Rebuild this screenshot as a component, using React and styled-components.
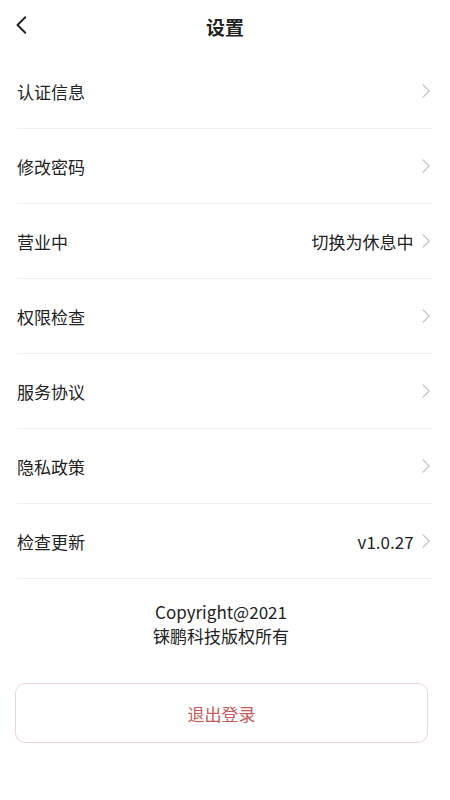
import React from "react"
import styled, { createGlobalStyle } from "styled-components"

const items = [
  { label: "认证信息" },
  { label: "修改密码" },
  { label: "营业中", value: "切换为休息中" },
  { label: "权限检查" },
  { label: "服务协议" },
  { label: "隐私政策" },
  { label: "检查更新", value: "v1.0.27" },
]

const Chevron = ({ size = 14, color = "#c9c9c9", dir = "right", width = 1.4 }) => (
  <svg width={size * 0.6} height={size} viewBox="0 0 8 14" fill="none">
    <path
      d={dir === "right" ? "M1 1 L7 7 L1 13" : "M7 1 L1 7 L7 13"}
      stroke={color}
      strokeWidth={width}
      strokeLinecap="round"
      strokeLinejoin="round"
    />
  </svg>
)

const App = () => (
  <Page>
    <GlobalStyle />
    <Header>
      <Back>
        <Chevron size={18} color="#222" dir="left" width={1.5} />
      </Back>
      <Title>设置</Title>
    </Header>
    <List>
      {items.map(item => (
        <Row key={item.label}>
          <Label>{item.label}</Label>
          <Right>
            {item.value && <Value>{item.value}</Value>}
            <Chevron />
          </Right>
        </Row>
      ))}
    </List>
    <Copyright>
      <Line>Copyright@2021</Line>
      <Line>铼鹏科技版权所有</Line>
    </Copyright>
    <Logout>退出登录</Logout>
  </Page>
)

const GlobalStyle = createGlobalStyle`
  body {
    margin: 0;
    background: #fff;
    font-family: "Noto Sans CJK SC", "Noto Sans", sans-serif;
    color: #222;
  }
`

const Page = styled.div`
  width: 450px;
  min-height: 800px;
  background: #fff;
`

const Header = styled.div`
  position: relative;
  display: flex;
  align-items: center;
  justify-content: center;
  height: 54px;
`

const Back = styled.div`
  position: absolute;
  left: 16px;
  top: 16px;
  display: flex;
`

const Title = styled.h1`
  margin: 0 0 2px 0;
  font-size: 19px;
  font-weight: 700;
  color: #222;
`

const List = styled.div`
  display: flex;
  flex-direction: column;
  padding: 0 18px 0 17px;
`

const Row = styled.div`
  display: flex;
  align-items: center;
  justify-content: space-between;
  height: 74px;
  border-bottom: 1px solid #f0f0f0;
`

const Label = styled.span`
  font-size: 17px;
  color: #222;
`

const Right = styled.div`
  display: flex;
  align-items: center;
  gap: 8px;
  padding-right: 2px;
`

const Value = styled.span`
  font-size: 17px;
  color: #222;
`

const Copyright = styled.div`
  display: flex;
  flex-direction: column;
  align-items: center;
  gap: 0;
  padding-top: 21px;
  margin-right: 8px;
`

const Line = styled.div`
  font-size: 17px;
  line-height: 24px;
  color: #222;
`

const Logout = styled.button`
  display: flex;
  align-items: center;
  justify-content: center;
  margin: 35px 0 0 15px;
  width: 413px;
  height: 60px;
  background: #fff;
  border: 1.5px solid #ead6d6;
  border-radius: 10px;
  font-family: "Noto Sans CJK SC", "Noto Sans", sans-serif;
  font-size: 17px;
  color: #c45a5a;
`

export default App
